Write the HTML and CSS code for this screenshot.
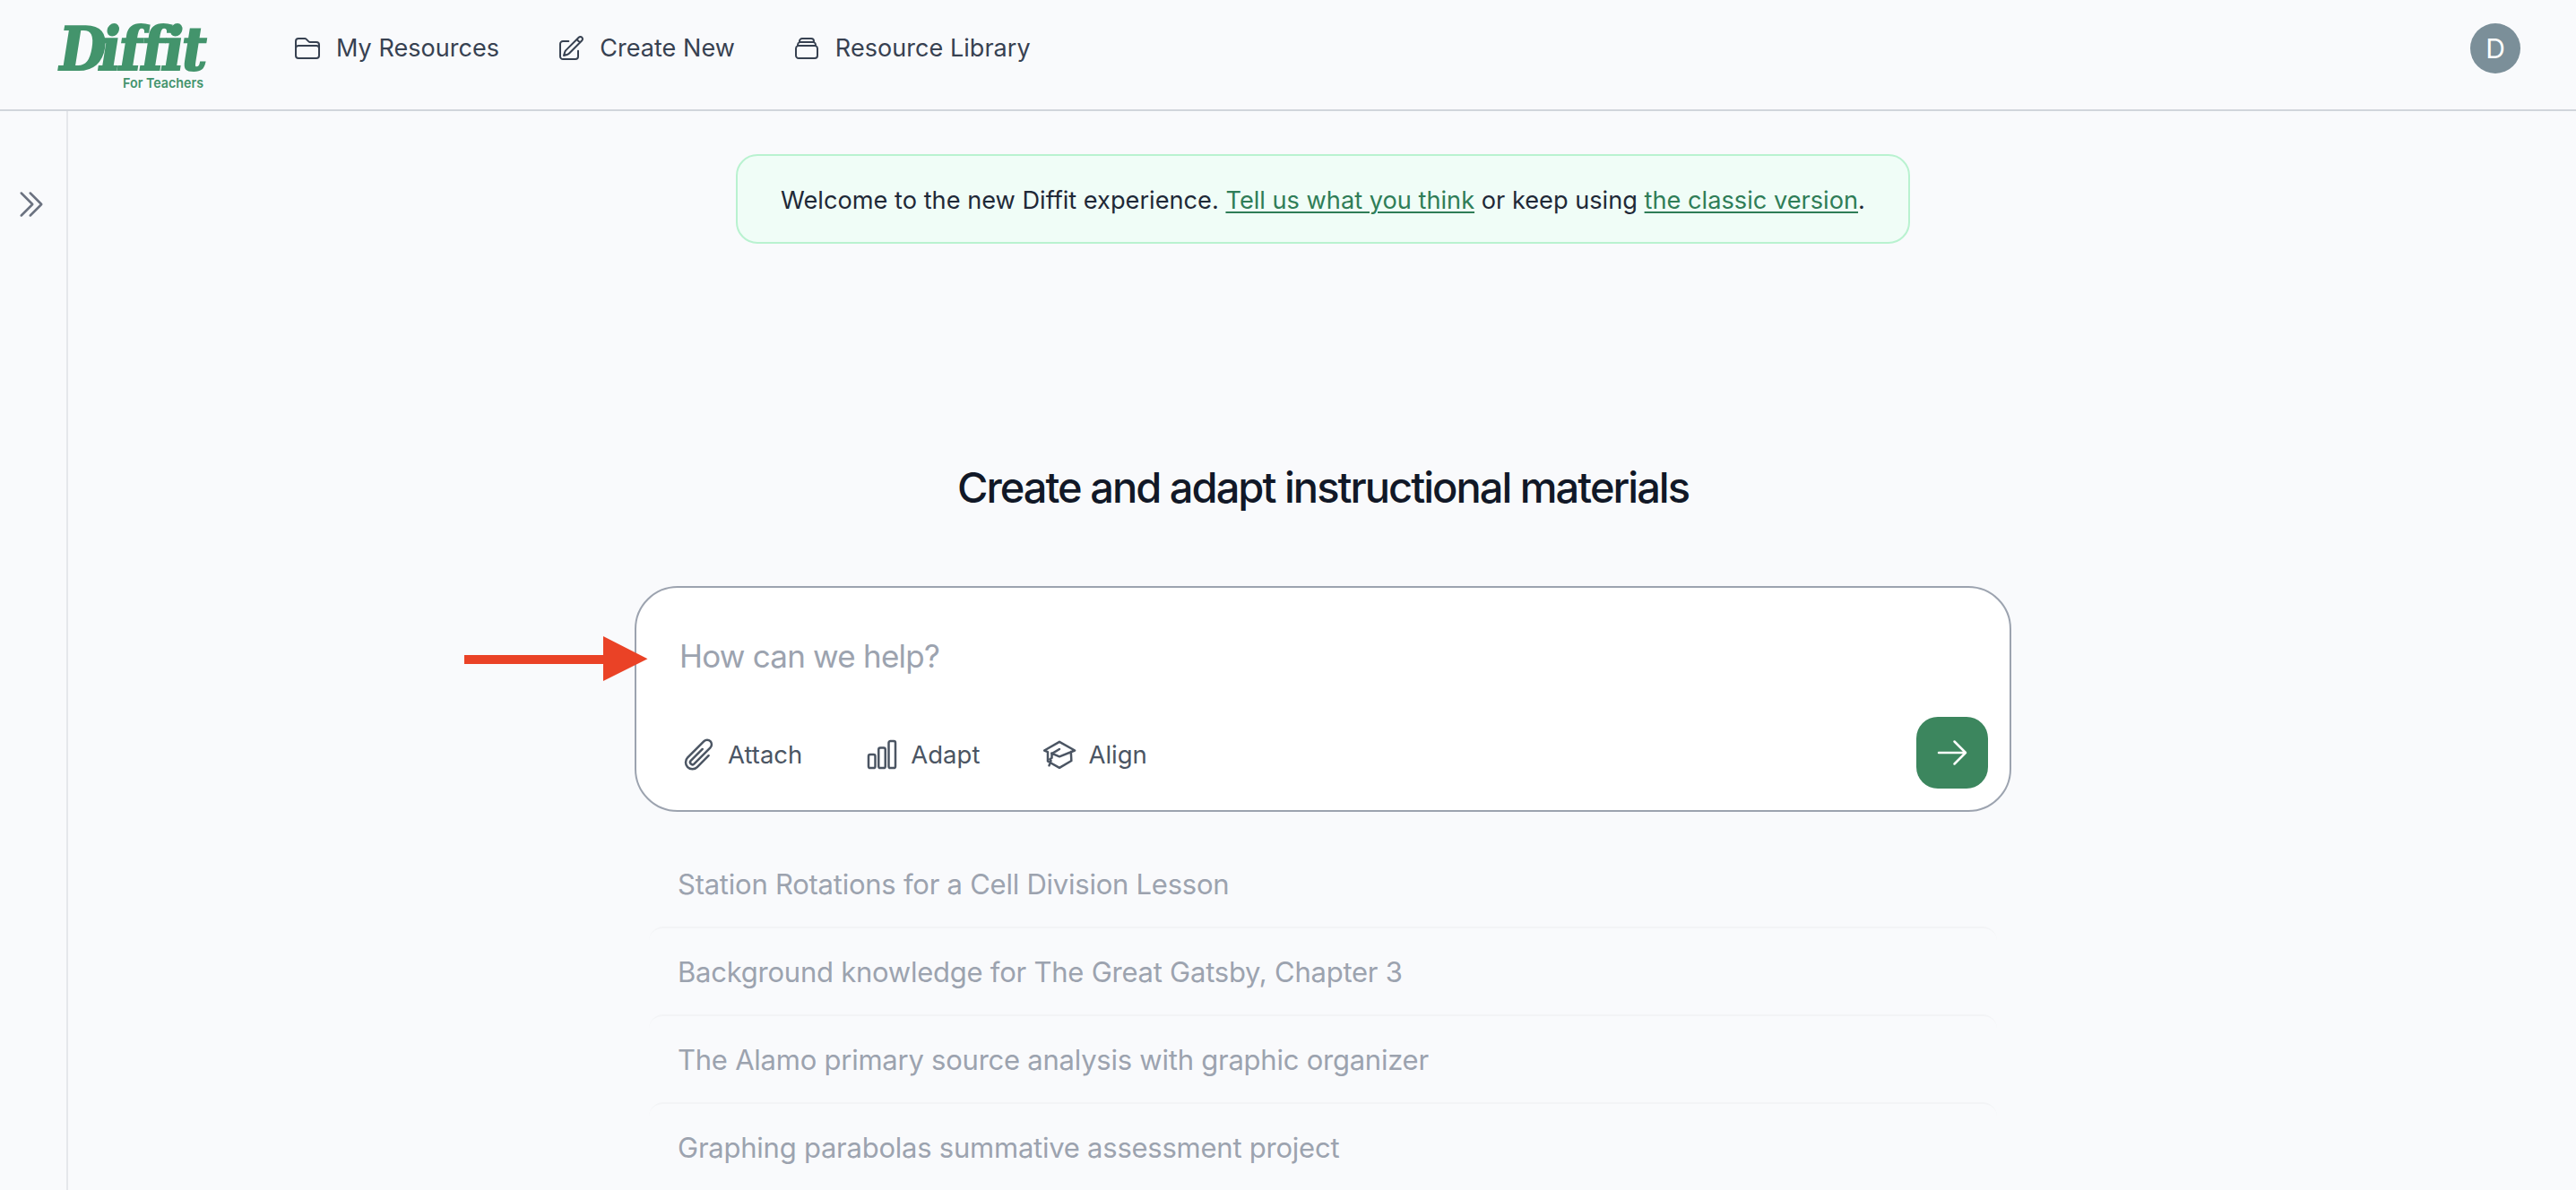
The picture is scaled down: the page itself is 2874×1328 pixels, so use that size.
FILE: index.html
```html
<!DOCTYPE html>
<html lang="en">
<head>
<meta charset="utf-8">
<title>Diffit For Teachers</title>
<link rel="stylesheet" href="styles.css">
</head>
<body>
<header class="header">
  <svg class="logo" width="172" height="92" viewBox="0 0 172 92" role="img" aria-label="Diffit For Teachers">
    <text class="logo-word" transform="translate(0 67) skewX(-9)" y="0" x="1.500 47 68.500 93.500 117.500 138.500">Diffit</text>
    <text class="logo-tag" x="76" y="86.500" textLength="90" lengthAdjust="spacingAndGlyphs">For Teachers</text>
  </svg>
  <nav class="nav">
    <a class="nav-item"><svg class="icon" viewBox="0 0 24 24"><path d="M2.25 12.75V12A2.25 2.25 0 0 1 4.5 9.75h15A2.25 2.25 0 0 1 21.75 12v.75m-8.69-6.44-2.12-2.12a1.5 1.5 0 0 0-1.061-.44H4.5A2.25 2.25 0 0 0 2.25 6v12a2.25 2.25 0 0 0 2.25 2.25h15A2.25 2.25 0 0 0 21.75 18V9a2.25 2.25 0 0 0-2.25-2.25h-5.379a1.5 1.5 0 0 1-1.06-.44Z"/></svg><span>My Resources</span></a>
    <a class="nav-item"><svg class="icon" viewBox="0 0 24 24"><path d="m16.862 4.487 1.687-1.688a1.875 1.875 0 1 1 2.652 2.652L10.582 16.07a4.5 4.5 0 0 1-1.897 1.13L6 18l.8-2.685a4.5 4.5 0 0 1 1.13-1.897l8.932-8.931Zm0 0L19.5 7.125M18 14v4.75A2.25 2.25 0 0 1 15.75 21H5.25A2.25 2.25 0 0 1 3 18.75V8.25A2.25 2.25 0 0 1 5.25 6H10"/></svg><span>Create New</span></a>
    <a class="nav-item"><svg class="icon" viewBox="0 0 24 24"><path d="M6 6.878V6a2.25 2.25 0 0 1 2.25-2.25h7.5A2.25 2.25 0 0 1 18 6v.878m-12 0c.235-.083.487-.128.75-.128h10.5c.263 0 .515.045.75.128m-12 0A2.25 2.25 0 0 0 4.5 9v.878m13.5-3A2.25 2.25 0 0 1 19.5 9v.878m0 0a2.246 2.246 0 0 0-.75-.128H5.25c-.263 0-.515.045-.75.128m15 0A2.25 2.25 0 0 1 21 12v6a2.25 2.25 0 0 1-2.25 2.25H5.25A2.25 2.25 0 0 1 3 18v-6c0-.98.626-1.813 1.5-2.122"/></svg><span>Resource Library</span></a>
  </nav>
  <div class="avatar">D</div>
</header>
<div class="body">
  <aside class="sidebar">
    <svg class="icon-lg" viewBox="0 0 24 24"><path d="m5.25 4.5 7.5 7.5-7.5 7.5m6-15 7.5 7.5-7.5 7.5"/></svg>
  </aside>
  <main class="main">
    <p class="banner">Welcome to the new Diffit experience. <a class="link">Tell us what you think</a> or keep using <a class="link">the classic version</a>.</p>
    <h1 class="title">Create and adapt instructional materials</h1>
    <section class="prompt">
      <div class="placeholder">How can we help?</div>
      <div class="actions">
        <div class="tool"><svg class="icon-lg" viewBox="0 0 24 24"><path d="m18.375 12.739-7.693 7.693a4.5 4.5 0 0 1-6.364-6.364l10.94-10.94A3 3 0 1 1 19.5 7.372L8.552 18.32m.009-.01-.01.01m5.699-9.941-7.81 7.81a1.5 1.5 0 0 0 2.112 2.13"/></svg><span>Attach</span></div>
        <div class="tool"><svg class="icon-lg" viewBox="0 0 24 24"><path d="M3 13.125C3 12.504 3.504 12 4.125 12h2.25c.621 0 1.125.504 1.125 1.125v6.75C7.5 20.496 6.996 21 6.375 21h-2.25A1.125 1.125 0 0 1 3 19.875v-6.75ZM9.75 8.625c0-.621.504-1.125 1.125-1.125h2.25c.621 0 1.125.504 1.125 1.125v11.25c0 .621-.504 1.125-1.125 1.125h-2.25a1.125 1.125 0 0 1-1.125-1.125V8.625ZM16.5 4.125c0-.621.504-1.125 1.125-1.125h2.25C20.496 3 21 3.504 21 4.125v15.75c0 .621-.504 1.125-1.125 1.125h-2.25a1.125 1.125 0 0 1-1.125-1.125V4.125Z"/></svg><span>Adapt</span></div>
        <div class="tool"><svg class="icon-lg" viewBox="0 0 24 24"><path d="M1.900 9.300 12 3.500l10.300 5.800L12 13.400 6.700 11.200M1.900 9.300l2.300 1v6.200L12 20.900l8-4.700-.3-6M12 8.400 6.900 11.500v2.700M6.900 14.200l-1.200 1 .6 1-1.200 3.200M4.200 16.500l1.600.900"/></svg><span>Align</span></div>
        <div class="send"><svg class="icon-lg" viewBox="0 0 24 24"><path d="M13.5 4.5 21 12m0 0-7.5 7.5M21 12H3"/></svg></div>
      </div>
      <svg class="pointer" width="205" height="50" viewBox="0 0 205 50"><path d="M0 21h155V0l49.500 25.200L155 50V31H0Z"/></svg>
    </section>
    <ul class="suggestions">
      <li>Station Rotations for a Cell Division Lesson</li>
      <li>Background knowledge for The Great Gatsby, Chapter 3</li>
      <li>The Alamo primary source analysis with graphic organizer</li>
      <li>Graphing parabolas summative assessment project</li>
    </ul>
  </main>
</div>
</body>
</html>
```
FILE: styles.css
```css
* { box-sizing: border-box; margin: 0; padding: 0; }
html, body { height: 100%; }
body {
  height: 1328px;
  overflow: hidden;
  display: flex;
  flex-direction: column;
  background: #f9fafc;
  color: #1f2937;
  font-family: Inter, "Liberation Sans", sans-serif;
  font-size: 28px;
  line-height: 40px;
}
svg { display: block; flex: none; }
.icon, .icon-lg {
  fill: none;
  stroke: currentColor;
  stroke-width: 1.5;
  stroke-linecap: round;
  stroke-linejoin: round;
}
.icon { width: 32px; height: 32px; }
.icon-lg { width: 40px; height: 40px; }

.header {
  flex: none;
  display: flex;
  align-items: flex-start;
  height: 124px;
  padding: 0 62px 0 61px;
  border-bottom: 2px solid #d1d5db;
}
.logo { margin-top: 11px; overflow: visible; fill: #43946c; }
.logo-word {
  font: bold 67px "DejaVu Serif Condensed", "DejaVu Serif", serif;
  font-stretch: condensed;
  stroke: #43946c;
  stroke-width: 2;
}
.logo-tag { font: 600 15px Inter, sans-serif; }
.nav {
  display: flex;
  gap: 64px;
  margin: 34px 0 0 94px;
  color: #374151;
}
.nav-item { display: flex; align-items: center; gap: 16px; white-space: nowrap; }
.nav-item span { font-size: 27px; letter-spacing: 0.05px; }
.avatar {
  width: 56px;
  height: 56px;
  margin: 26px 0 0 auto;
  border-radius: 50%;
  background: #7b8f99;
  color: #fff;
  font-size: 30px;
  line-height: 56px;
  text-align: center;
}

.body { flex: 1; display: flex; min-height: 0; }
.sidebar {
  flex: none;
  width: 76px;
  padding: 84px 0 0 15px;
  border-right: 2px solid #e5e7eb;
  color: #6b7280;
}
.main {
  flex: 1;
  display: flex;
  flex-direction: column;
  align-items: center;
  padding: 48px 0 0 2px;
}
.banner {
  width: 1310px;
  height: 100px;
  line-height: 96px;
  padding-top: 2px;
  border: 2px solid #b9f2d0;
  border-radius: 24px;
  background: #f0fdf7;
  font-size: 27.2px;
  text-align: center;
  white-space: nowrap;
}
.link {
  color: #2f7d57;
  text-decoration: underline;
  text-decoration-thickness: 2px;
  text-underline-offset: 3px;
}
.title {
  margin-top: 242px;
  color: #111827;
  font-size: 47px;
  font-weight: 500;
  line-height: 60px;
  letter-spacing: -1.98px;
  white-space: nowrap;
}
.prompt {
  position: relative;
  display: flex;
  flex-direction: column;
  justify-content: space-between;
  width: 1536px;
  height: 252px;
  margin-top: 80px;
  padding: 50px 24px 24px 50px;
  border: 2px solid #9ca3af;
  border-radius: 48px;
  background: #fff;
}
.placeholder {
  margin-left: -2px;
  color: #9ca3af;
  font-size: 35px;
  line-height: 52px;
  letter-spacing: -0.78px;
}
.actions { display: flex; align-items: center; gap: 69px; color: #4b5563; font-size: 27.5px; }
.tool { display: flex; align-items: center; gap: 12px; margin-top: 4px; }
.send {
  display: flex;
  align-items: center;
  justify-content: center;
  width: 80px;
  height: 80px;
  margin-left: auto;
  border-radius: 24px;
  background: #3c865e;
  color: #fff;
}
.pointer { position: absolute; left: -192px; top: 54px; fill: #ea4226; }
.suggestions {
  width: 1504px;
  margin-top: 30px;
  list-style: none;
  color: #9ca3af;
  font-size: 31px;
  letter-spacing: -0.24px;
}
.suggestions li {
  height: 98px;
  padding: 0 32px;
  border-top: 2px solid #f3f4f6;
  border-radius: 16px;
  line-height: 98px;
  white-space: nowrap;
}
.suggestions li:first-child { border-top-color: transparent; }
```
